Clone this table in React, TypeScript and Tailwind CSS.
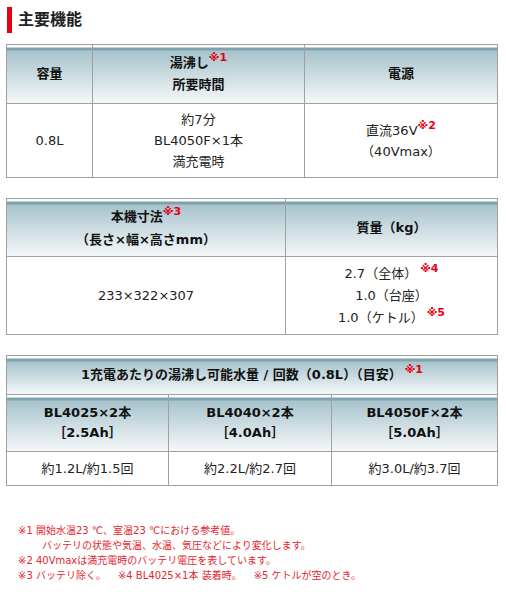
import React from "react";

const FONT = "font-['DejaVu_Sans','Noto_Sans_CJK_JP',sans-serif]";

const TH =
  "border border-[#a0a0a0] p-0 text-center align-middle font-bold text-[#111] bg-[linear-gradient(to_bottom,#ffffff_0px,#ffffff_2px,#7fa3ad_2px,#7fa3ad_5px,#a7c3cc_5px,#f5f8f9_100%)]";
const TD = "border border-[#a0a0a0] p-0 text-center align-middle text-[#222] bg-white";

function Note({ n, space }: { n: string; space?: boolean }) {
  return (
    <span className={`relative -top-[6px] text-[11px] font-bold leading-none text-[#e60012] ${space ? "ml-[3px]" : ""}`}>
      ※{n}
    </span>
  );
}

export default function App() {
  return (
    <div className={`w-[506px] min-h-[602px] bg-white pl-[6px] pt-[7px] text-[13px] ${FONT}`}>
      <div className="ml-px flex items-center">
        <div className="h-[26px] w-[5px] bg-[#e60012]" />
        <h2 className="ml-[6px] text-[16px] font-bold leading-[26px] text-[#222]">主要機能</h2>
      </div>

      <table className="mt-[11px] w-[491px] table-fixed border-collapse">
        <colgroup>
          <col className="w-[86px]" />
          <col className="w-[212px]" />
          <col className="w-[193px]" />
        </colgroup>
        <tbody>
          <tr className="h-[59px] leading-[22px]">
            <th className={TH}>容量</th>
            <th className={TH}>
              湯沸し<Note n="1" />
              <br />
              所要時間
            </th>
            <th className={TH}>電源</th>
          </tr>
          <tr className="h-[74px] leading-[21px]">
            <td className={TD}>0.8L</td>
            <td className={TD}>
              約7分
              <br />
              BL4050F×1本
              <br />
              満充電時
            </td>
            <td className={TD}>
              直流36V<Note n="2" />
              <br />
              （40Vmax）
            </td>
          </tr>
        </tbody>
      </table>

      <table className="mt-[20px] w-[491px] table-fixed border-collapse">
        <colgroup>
          <col className="w-[279px]" />
          <col className="w-[212px]" />
        </colgroup>
        <tbody>
          <tr className="h-[58px] leading-[23px]">
            <th className={TH}>
              本機寸法<Note n="3" />
              <br />
              （長さ×幅×高さmm）
            </th>
            <th className={TH}>質量（kg）</th>
          </tr>
          <tr className="h-[78px] leading-[22px]">
            <td className={TD}>233×322×307</td>
            <td className={TD}>
              2.7（全体）<Note n="4" space />
              <br />
              1.0（台座）
              <br />
              1.0（ケトル）<Note n="5" space />
            </td>
          </tr>
        </tbody>
      </table>

      <table className="mt-[20px] w-[491px] table-fixed border-collapse">
        <colgroup>
          <col className="w-[162px]" />
          <col className="w-[163px]" />
          <col className="w-[166px]" />
        </colgroup>
        <tbody>
          <tr className="h-[39px]">
            <th className={TH} colSpan={3}>
              1充電あたりの湯沸し可能水量 / 回数（0.8L）（目安）<Note n="1" space />
            </th>
          </tr>
          <tr className="h-[57px] leading-[20px]">
            <th className={TH}>
              BL4025×2本
              <br />
              ［2.5Ah］
            </th>
            <th className={TH}>
              BL4040×2本
              <br />
              ［4.0Ah］
            </th>
            <th className={TH}>
              BL4050F×2本
              <br />
              ［5.0Ah］
            </th>
          </tr>
          <tr className="h-[34px]">
            <td className={TD}>約1.2L/約1.5回</td>
            <td className={TD}>約2.2L/約2.7回</td>
            <td className={TD}>約3.0L/約3.7回</td>
          </tr>
        </tbody>
      </table>

      <div className="mt-[37px] pl-[12px] text-[10px] leading-[15px] text-[#e4262e]">
        <p>※1 開始水温23 ℃、室温23 ℃における参考値。</p>
        <p className="pl-[24px]">バッテリの状態や気温、水温、気圧などにより変化します。</p>
        <p>※2 40Vmaxは満充電時のバッテリ電圧を表しています。</p>
        <p>
          ※3 バッテリ除く。<span className="ml-[12px]">※4 BL4025×1本 装着時。</span>
          <span className="ml-[12px]">※5 ケトルが空のとき。</span>
        </p>
      </div>
    </div>
  );
}
